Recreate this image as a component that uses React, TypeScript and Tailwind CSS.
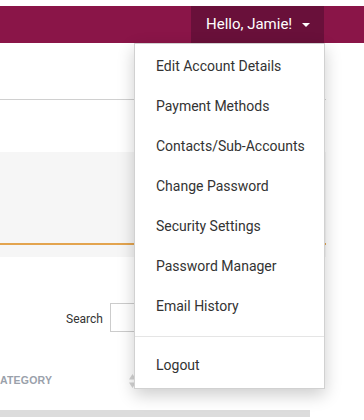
import React from "react";

const items = [
  "Edit Account Details",
  "Payment Methods",
  "Contacts/Sub-Accounts",
  "Change Password",
  "Security Settings",
  "Password Manager",
  "Email History",
];

export default function App() {
  return (
    <div
      className="relative w-[364px] h-[420px] overflow-hidden bg-white"
      style={{ fontFamily: "Roboto, 'Liberation Sans', sans-serif" }}
    >
      <div className="h-[6px] bg-white" />
      <header className="h-[37px] bg-[#8a1548] flex justify-end pr-[40px]">
        <div className="w-[133px] bg-[#69103a] flex items-center pl-[15px] text-white text-[15px] whitespace-nowrap">
          <span>Hello, Jamie!</span>
          <span className="ml-[10px] w-0 h-0 border-l-[4px] border-r-[4px] border-t-[4px] border-l-transparent border-r-transparent border-t-white" />
        </div>
      </header>

      <div className="w-[326px]">
        <div className="h-[57px] border-b border-[#d0d0d0]" />
        <div className="h-[52px]" />
        <div className="bg-[#f6f6f6]">
          <div className="h-[93px] border-b-2 border-[#e3a44f]" />
          <div className="h-[12px]" />
        </div>
        <div className="h-[46px]" />
        <div className="flex items-center h-[29px]">
          <span className="ml-[66px] text-[12px] text-[#333] pt-[2px]">Search</span>
          <div className="ml-[7px] w-[120px] h-[29px] border border-[#cccccc] bg-white" />
        </div>
        <div className="h-[34px]" />
        <div className="h-[30px] flex items-center">
          <span
            className="text-[10.5px] font-bold text-[#9aa1ab] tracking-[0.2px]"
            style={{ fontFamily: "'Liberation Sans', Arial, sans-serif" }}
          >
            ATEGORY
          </span>
          <svg className="ml-[77px]" width="7" height="14" viewBox="0 0 7 14">
            <path d="M3.5 0 L7 5.5 L0 5.5 Z" fill="#d4d4d4" />
            <path d="M0 8.5 L7 8.5 L3.5 14 Z" fill="#d4d4d4" />
          </svg>
        </div>
        <div className="h-[14px]" />
        <div className="w-[310px] h-[7px] bg-[#dcdcdc]" />
      </div>

      <div className="absolute left-[134px] top-[43px] w-[191px] bg-white border border-[rgba(0,0,0,0.18)] shadow-[0_6px_16px_rgba(0,0,0,0.2)] pt-[2px] pb-[3px] text-[14px] text-[#333] whitespace-nowrap">
        {items.map((t) => (
          <div key={t} className="h-[40px] flex items-center px-[21px]">
            {t}
          </div>
        ))}
        <div className="mt-[10px] mb-[8px] h-px bg-[#e5e5e5]" />
        <div className="h-[40px] flex items-center px-[21px]">Logout</div>
      </div>
    </div>
  );
}
